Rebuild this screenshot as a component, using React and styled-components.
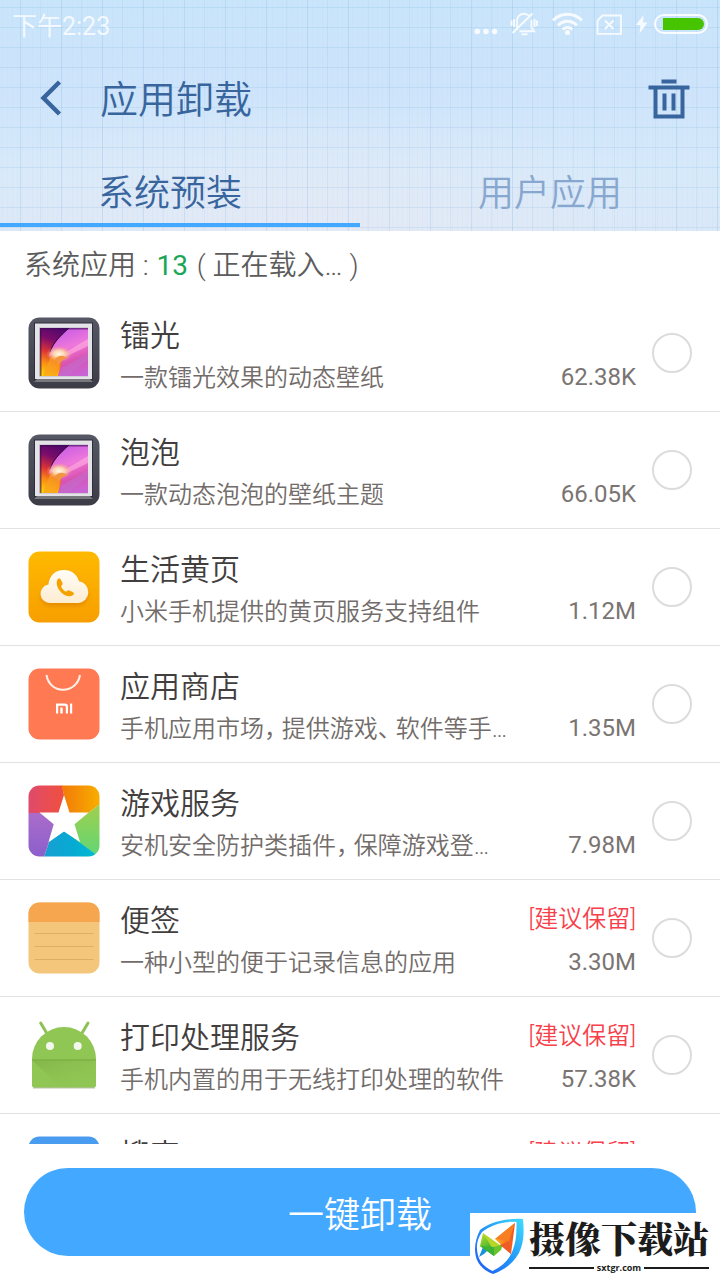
import React, { useState } from "react";
import styled, { createGlobalStyle } from "styled-components";

const GlobalStyle = createGlobalStyle`
  * {
    box-sizing: border-box;
  }
  body {
    margin: 0;
    background-color: white;
    font-family: Roboto, "Noto Sans CJK SC", sans-serif;
    font-weight: 350;
  }
  button {
    padding: 0;
    border: none;
    background: none;
    font-family: inherit;
    cursor: pointer;
  }
`;

const Page = styled.div`
  position: relative;
  display: flex;
  flex-flow: column;
  height: 100vh;
  overflow: hidden;
`;

const Header = styled.header`
  flex: none;
  background-image: repeating-linear-gradient(
      90deg,
      transparent 0 20px,
      rgba(110, 165, 215, 0.2) 20px 21px,
      transparent 21px 40px,
      rgba(110, 165, 215, 0.1) 40px 41px
    ),
    repeating-linear-gradient(
      90deg,
      transparent 0 2px,
      rgba(160, 200, 232, 0.08) 2px 3px,
      transparent 3px 5px
    ),
    repeating-linear-gradient(
      180deg,
      transparent 0 7px,
      rgba(110, 165, 215, 0.16) 7px 8px,
      transparent 8px 20px
    ),
    radial-gradient(
      ellipse 400px 130px at 42% 100%,
      rgba(230, 234, 245, 0.9),
      rgba(230, 234, 245, 0)
    ),
    linear-gradient(180deg, #c9e5fb 0%, #cee4fb 38%, #d7eafa 75%, #dae8f8 100%);
`;

const StatusBar = styled.div`
  display: flex;
  justify-content: space-between;
  align-items: center;
  height: 48px;
  padding: 0 12px;
  font-size: 25px;
  font-weight: 400;
  color: rgba(255, 255, 255, 0.8);
`;
const StatusIcons = styled.div`
  display: flex;
  align-items: center;
  gap: 12px;
  svg {
    display: block;
  }
`;
const Power = styled.div`
  display: flex;
  gap: 6px;
`;

const TitleBar = styled.div`
  display: flex;
  align-items: center;
  gap: 24px;
  height: 104px;
  padding: 0 28px;
  color: #38659d;
`;
const Title = styled.h1`
  flex: 1;
  margin: 0;
  font-size: 38px;
  font-weight: 350;
  line-height: 48px;
`;
const IconButton = styled.button`
  width: 48px;
  height: 48px;
  color: inherit;
  svg {
    display: block;
  }
`;

const Tabs = styled.div`
  display: flex;
  padding-bottom: 4px;
`;
const Tab = styled.button`
  flex: 1;
  && {
    padding: ${props => (props.$first ? "4px 20px 0 0" : "4px 0 0 20px")};
    border-bottom: 4px solid
      ${props => (props.$active ? "#43a8ff" : "transparent")};
  }
  height: 75px;
  font-size: 36px;
  font-weight: 350;
  color: ${props => (props.$active ? "#38659d" : "#88a7cf")};
`;

const Summary = styled.p`
  flex: none;
  margin: 0;
  padding: 15px 24px 9px;
  font-size: 28px;
  line-height: 40px;
  color: #5c5c5c;
`;
const Count = styled.span`
  margin: 0 2px 0 1px;
  font-weight: 400;
  color: #1aa655;
`;

const List = styled.ul`
  flex: 1;
  min-height: 0;
  margin: 0;
  padding: 0;
  overflow: hidden;
  list-style: none;
`;
const Row = styled.li`
  border-bottom: 1px solid #e2e2e2;
`;
const RowLabel = styled.label`
  display: flex;
  align-items: center;
  height: 116px;
  padding: 0 28px;
  cursor: pointer;
`;
const AppIcon = styled.svg`
  flex: none;
  width: 72px;
  height: 72px;
  margin-right: 20px;
`;
const Texts = styled.div`
  flex: 1;
  display: flex;
  flex-flow: column;
  gap: 8px;
  min-width: 0;
  padding-top: 6px;
`;
const Line = styled.div`
  display: flex;
  justify-content: space-between;
  align-items: flex-start;
  min-height: 32px;
`;
const Name = styled.span`
  font-size: 30px;
  line-height: 36px;
  color: #423e3e;
`;
const Tag = styled.span`
  font-size: 24px;
  line-height: 32px;
  color: #f8404a;
`;
const Description = styled.span`
  overflow: hidden;
  font-size: 24px;
  line-height: 32px;
  font-feature-settings: "halt";
  text-overflow: ellipsis;
  white-space: nowrap;
  color: #726c6a;
`;
const Size = styled.span`
  font-size: 24px;
  font-weight: 400;
  line-height: 30px;
  color: #7a7472;
`;
const Check = styled.input`
  flex: none;
  appearance: none;
  width: 40px;
  height: 40px;
  margin: 0 0 0 16px;
  border: 2px solid #dcdcdc;
  border-radius: 50%;
  &:checked {
    border: 12px solid #43a8ff;
  }
`;

const Footer = styled.footer`
  flex: none;
  padding: 24px;
`;
const UninstallButton = styled.button`
  display: block;
  width: 100%;
  height: 88px;
  border-radius: 44px;
  && {
    background-color: #43a8ff;
  }
  font-size: 36px;
  font-weight: 350;
  color: white;
`;

const Watermark = styled.div`
  position: absolute;
  right: 0;
  bottom: 0;
  display: flex;
  gap: 4px;
  height: 67px;
  padding: 0 11px 0 1px;
  background-color: white;
  color: #1c1c1c;
`;
const WatermarkName = styled.div`
  padding-top: 2px;
  font-family: "Noto Serif CJK SC", "Noto Sans CJK SC", serif;
  font-size: 36px;
  font-weight: 900;
  line-height: 46px;
  white-space: nowrap;
`;
const WatermarkSite = styled.div`
  display: flex;
  align-items: center;
  gap: 3px;
  font-family: "Open Sans", sans-serif;
  font-size: 9px;
  font-weight: 700;
  line-height: 14px;
  &::before,
  &::after {
    content: "";
    flex: 1;
    height: 2px;
    background-color: #1c1c1c;
  }
`;

const PictureArt = ({ id }) => (
  <>
    <defs>
      <linearGradient id={`${id}-case`} x2="0" y2="1">
        <stop offset="0" stopColor="#565866" />
        <stop offset="1" stopColor="#3b3c45" />
      </linearGradient>
      <linearGradient id={`${id}-left`} x1="0.5" y1="0" x2="0.1" y2="1">
        <stop offset="0" stopColor="#4a066e" />
        <stop offset="0.3" stopColor="#7c0d6a" />
        <stop offset="0.55" stopColor="#dc3434" />
        <stop offset="0.75" stopColor="#f98a14" />
        <stop offset="1" stopColor="#ffd800" />
      </linearGradient>
      <linearGradient id={`${id}-right`} x1="0.4" y1="0" x2="0.7" y2="1">
        <stop offset="0" stopColor="#c95ce6" />
        <stop offset="0.4" stopColor="#ee78da" />
        <stop offset="0.7" stopColor="#d952b0" />
        <stop offset="1" stopColor="#c964d4" />
      </linearGradient>
      <radialGradient id={`${id}-glow`}>
        <stop offset="0" stopColor="#fffbe8" />
        <stop offset="0.45" stopColor="#ffdcae" stopOpacity="0.9" />
        <stop offset="1" stopColor="#ff9a6c" stopOpacity="0" />
      </radialGradient>
      <clipPath id={`${id}-clip`}>
        <rect x="12" y="11" width="48" height="48" />
      </clipPath>
    </defs>
    <rect x="0.5" y="0.5" width="71" height="71" rx="11" fill={`url(#${id}-case)`} />
    <path d="M6 5.5h59v58H6z" fill="#2e2d3c" />
    <path d="M6 65l4-4h51l4 4z" fill="#77787c" />
    <rect x="7" y="6.500" width="57" height="55.500" fill="#e4e3e7" />
    <rect x="11" y="10.500" width="49" height="49" fill="#b9b4c2" />
    <g clipPath={`url(#${id}-clip)`}>
      <rect x="12" y="11" width="48" height="48" fill={`url(#${id}-left)`} />
      <path d="M41 11C30 21 23 29 21 40c6-4 11-3 12 2 1 6-2 12-3 17h30V11z" fill={`url(#${id}-right)`} />
      <path d="M60 22L38 35l-3 6 25-12z" fill="#ffa6e0" opacity="0.7" />
      <path d="M60 36L34 51l-4 8h10l20-16z" fill="#c070d0" opacity="0.5" />
      <path d="M41 11C31 20 25 26 22 35" fill="none" stroke="#32083c" strokeWidth="1" />
      <path d="M22 41c-2 6-6 12-7 18h13c2-6 4-11 6-17-4-5-8-5-12-1z" fill="#f9a022" opacity="0.7" />
      <ellipse cx="31" cy="37" rx="13" ry="8" fill={`url(#${id}-glow)`} />
      <path d="M27 42c4-4 8-4 12-1-4 1-7 4-9 8-1-3-1-5-3-7z" fill="#f3953c" />
      <path d="M12 11h48v1.500H13.500V59H12z" fill="#3b0a52" opacity="0.6" />
    </g>
  </>
);

const YellowPagesArt = () => (
  <>
    <defs>
      <linearGradient id="yp-bg" x2="0" y2="1">
        <stop offset="0" stopColor="#ffb900" />
        <stop offset="1" stopColor="#f79f00" />
      </linearGradient>
      <linearGradient id="yp-cloud" x2="0" y2="1">
        <stop offset="0" stopColor="#fffdf8" />
        <stop offset="1" stopColor="#fdecd0" />
      </linearGradient>
      <filter id="yp-shadow" x="-20%" y="-20%" width="140%" height="160%">
        <feDropShadow dx="0" dy="3" stdDeviation="2" floodColor="#d97a00" floodOpacity="0.6" />
      </filter>
    </defs>
    <rect x="0.5" y="0.5" width="71" height="71" rx="11" fill="url(#yp-bg)" />
    <path
      d="M22 52a9.300 9.300 0 0 1-1.500-18.500C21 25 27 19 36 19c7.500 0 13 4.500 15 11.200A11 11 0 0 1 50.500 52z"
      fill="url(#yp-cloud)"
      filter="url(#yp-shadow)"
    />
    <path
      d="M29.500 28.500c1-1.400 2.700-1.200 3.500.4l1.500 3c.6 1.300-.8 2.300-1.500 3.200.8 2.600 2.600 4.500 5 5.600 1-.7 2-1.900 3.300-1.300l3.400 1.500c1.600.8 1.500 2.400.2 3.400-3.400 2.200-8.300.6-11.800-3-3.700-3.700-5.600-9.200-3.600-12.800z"
      fill="#f5a200"
    />
  </>
);

const StoreArt = () => (
  <>
    <rect x="0.5" y="0.5" width="71" height="71" rx="11" fill="#ff7a52" />
    <path d="M18.500 7c1.500 9 8 14.800 16.500 14.800S50.500 16 52 7" fill="none" stroke="#fff1e8" strokeWidth="2" />
    <path d="M28 45.500V35.500h9a3 3 0 0 1 3 3v7h-2.200v-6.500a1.300 1.300 0 0 0-1.300-1.300h-6.300v7.800z" fill="white" />
    <path d="M32.300 39.500h2.400v6h-2.400zM42 35.500h2.200v10H42z" fill="white" />
  </>
);

const GameArt = () => (
  <>
    <defs>
      <clipPath id="game-clip">
        <rect x="0.5" y="0.5" width="71" height="71" rx="11" />
      </clipPath>
      <linearGradient id="game-red">
        <stop offset="0" stopColor="#df4a6c" />
        <stop offset="1" stopColor="#f0503e" />
      </linearGradient>
      <linearGradient id="game-orange">
        <stop offset="0" stopColor="#f27a08" />
        <stop offset="1" stopColor="#f8ae00" />
      </linearGradient>
      <linearGradient id="game-green" x2="0" y2="1">
        <stop offset="0" stopColor="#a2cf4c" />
        <stop offset="1" stopColor="#5fd676" />
      </linearGradient>
      <linearGradient id="game-blue">
        <stop offset="0" stopColor="#189fd2" />
        <stop offset="0.5" stopColor="#06aad3" />
        <stop offset="1" stopColor="#00bcd0" />
      </linearGradient>
      <linearGradient id="game-purple" x2="0" y2="1">
        <stop offset="0" stopColor="#aa6cca" />
        <stop offset="1" stopColor="#8b5fcb" />
      </linearGradient>
    </defs>
    <g clipPath="url(#game-clip)">
      <path d="M0 0h34l2 10v26L12 28H0z" fill="url(#game-red)" />
      <path d="M33.500 0H72v19L46 39H36V10z" fill="url(#game-orange)" />
      <path d="M72 19L46 39l-10 8 31 22 5 3z" fill="url(#game-green)" />
      <path d="M36 46l-15 11-5 15h55l-5-4z" fill="url(#game-blue)" />
      <path d="M0 28h12l24 8-15 21-5 15H0z" fill="url(#game-purple)" />
      <path
        d="M36 10l5.500 17.500H60.500L46.500 39.300 52 57 36 46.500 20.500 57l5.200-17.700L11.500 27.500h19z"
        fill="white"
      />
    </g>
  </>
);

const NotesArt = () => (
  <>
    <rect x="0.5" y="0.5" width="71" height="71" rx="11" fill="#f4c67c" />
    <path d="M0.500 20v-8.500a11 11 0 0 1 11-11h49a11 11 0 0 1 11 11V20z" fill="#f7a650" />
    <path d="M6.500 31.500h59M6.500 44.500h59M6.500 57.500h59" stroke="#dcae68" strokeWidth="1" />
  </>
);

const AndroidArt = () => (
  <>
    <defs>
      <linearGradient id="droid-shade" x1="0" y1="0" x2="0.8" y2="1">
        <stop offset="0" stopColor="#7fae47" />
        <stop offset="1" stopColor="#8ec552" stopOpacity="0" />
      </linearGradient>
    </defs>
    <path d="M12.700 4l6.500 11M60 4l-6.500 11" stroke="#8ec153" strokeWidth="3" strokeLinecap="round" />
    <path d="M4 40a32 32 0 0 1 64 0v26a3 3 0 0 1-3 3H7a3 3 0 0 1-3-3z" fill="#90c653" />
    <path d="M4 41h64v25a3 3 0 0 1-3 3H33z" fill="url(#droid-shade)" opacity="0.7" />
    <path d="M4 41h64" stroke="#7db243" strokeWidth="1.500" />
    <path d="M5 69h62" stroke="#b9c4ac" strokeWidth="1" />
    <circle cx="22" cy="27" r="4" fill="#f4f7ee" />
    <circle cx="49.700" cy="27" r="4" fill="#f4f7ee" />
  </>
);

const SearchArt = () => (
  <>
    <rect x="0.5" y="0.5" width="71" height="71" rx="11" fill="#4a9cf0" />
    <circle cx="33" cy="33" r="14" fill="none" stroke="white" strokeWidth="4" />
    <path d="M43 43l12 12" stroke="white" strokeWidth="4" />
  </>
);

const apps = [
  { id: "leiguang", name: "镭光", desc: "一款镭光效果的动态壁纸", size: "62.38K", Art: PictureArt },
  { id: "paopao", name: "泡泡", desc: "一款动态泡泡的壁纸主题", size: "66.05K", Art: PictureArt },
  { id: "yellow", name: "生活黄页", desc: "小米手机提供的黄页服务支持组件", size: "1.12M", Art: YellowPagesArt },
  { id: "store", name: "应用商店", desc: "手机应用市场， 提供游戏、 软件等手…", size: "1.35M", Art: StoreArt },
  { id: "game", name: "游戏服务", desc: "安机安全防护类插件， 保障游戏登…", size: "7.98M", Art: GameArt },
  { id: "notes", name: "便签", desc: "一种小型的便于记录信息的应用", size: "3.30M", keep: true, Art: NotesArt },
  { id: "print", name: "打印处理服务", desc: "手机内置的用于无线打印处理的软件", size: "57.38K", keep: true, Art: AndroidArt },
  { id: "search", name: "搜索", desc: "", size: "", keep: true, Art: SearchArt }
];

const StatusBarComponent = () => (
  <StatusBar>
    <span>下午2:23</span>
    <StatusIcons>
      <svg width="24" height="24" fill="white" opacity="0.85">
        <circle cx="3.300" cy="19.500" r="2.800" />
        <circle cx="12" cy="19.500" r="2.800" />
        <circle cx="20.600" cy="19.500" r="2.800" />
      </svg>
      <svg width="30" height="24" fill="none" stroke="white" strokeWidth="1.900" opacity="0.85">
        <path d="M7 18V9.500C7 4.500 10 1.700 14 1.700c2.500 0 4 .8 5.300 2.200M21.500 8v7.500l2.500 3.700H9.500" />
        <path d="M2.500 21L22.500 1.500M11.500 22.300h6" />
        <path d="M1.500 8.500v5.500M4 7v8M24.500 7v8M27 8.500v5.500" />
      </svg>
      <svg width="32" height="24" fill="none" stroke="white" strokeWidth="3" opacity="0.85">
        <path d="M1 8.300C9.500.3 21.500.3 30 8.300M6 13.300c6-5.300 13-5.300 19 0M10.500 17.500c3-2.800 7-2.800 10 0" />
        <circle cx="15.500" cy="20.500" r="2.500" fill="white" stroke="none" />
      </svg>
      <svg width="28" height="24" fill="none" stroke="white" strokeWidth="1.800" opacity="0.85">
        <path d="M6.500 3.500H25v18.300H1.500V8.500z" />
        <path d="M9 8.500l8.500 8.500M17.500 8.500L9 17" strokeWidth="2" />
      </svg>
      <Power>
        <svg width="12" height="24" fill="white" opacity="0.85">
          <path d="M7.500 3L0 13h4.500L3.500 21.500 11.500 10.500H7z" />
        </svg>
        <svg width="54" height="24">
          <rect x="1" y="3" width="52" height="18" rx="9" fill="none" stroke="white" strokeWidth="2" opacity="0.9" />
          <path d="M9 6h35a6 6 0 0 1 0 12H9z" fill="#47c400" />
        </svg>
      </Power>
    </StatusIcons>
  </StatusBar>
);

const AppRow = ({ app, checked, onToggle }) => (
  <Row>
    <RowLabel>
      <AppIcon viewBox="0 0 72 72" aria-hidden="true">
        <app.Art id={app.id} />
      </AppIcon>
      <Texts>
        <Line>
          <Name>{app.name}</Name>
          {app.keep && <Tag>[建议保留]</Tag>}
        </Line>
        <Line>
          <Description>{app.desc}</Description>
          <Size>{app.size}</Size>
        </Line>
      </Texts>
      <Check type="checkbox" checked={checked} onChange={() => onToggle(app.id)} />
    </RowLabel>
  </Row>
);

const WatermarkComponent = () => (
  <Watermark>
    <svg width="54" height="67" aria-hidden="true">
      <defs>
        <linearGradient id="shield" x1="1" y1="0" x2="0" y2="1">
          <stop offset="0" stopColor="#3fdcff" />
          <stop offset="0.5" stopColor="#2196f8" />
          <stop offset="1" stopColor="#1f57f5" />
        </linearGradient>
        <linearGradient id="mark-left" x1="0" y1="0" x2="0.4" y2="1">
          <stop offset="0" stopColor="#c6de26" />
          <stop offset="1" stopColor="#1faa38" />
        </linearGradient>
        <linearGradient id="mark-right">
          <stop offset="0" stopColor="#fbb321" />
          <stop offset="1" stopColor="#ee4b23" />
        </linearGradient>
      </defs>
      <path
        d="M9 17C18 10 33 5 52 6c1 12 1 20-2 29-4 12-14 21-28 26C9 56 4 47 4 36c0-7 2-13 5-19zM11 19C7 25 5.500 30 6 36c.5 10 5 17 15.500 22 11-5 18-13 21-23 3-8 3-17 3-26C32 8 20 12 11 19z"
        fill="url(#shield)"
        fillRule="evenodd"
      />
      <path d="M12 34L8 44l5-3 5-5z" fill="#1693dc" />
      <path d="M12 20l11 14v9L9 33z" fill="url(#mark-left)" />
      <path d="M12 20l17 12-6 6z" fill="#b7d728" />
      <path d="M9 33l14 1v9z" fill="#3cb334" />
      <path d="M23 34l9-3-2 6-7 6z" fill="#6cc42c" />
      <path d="M44 10L24 26l16 15z" fill="url(#mark-right)" />
      <path d="M44 10l-6 18-14-2z" fill="#f77f22" />
      <path d="M38 28l2 13-11-9z" fill="#ef5a25" />
    </svg>
    <div>
      <WatermarkName>摄像下载站</WatermarkName>
      <WatermarkSite>sxtgr.com</WatermarkSite>
    </div>
  </Watermark>
);

const App = () => {
  const [tab, setTab] = useState("system");
  const [selected, setSelected] = useState([]);

  const toggle = id => {
    setSelected(
      selected.includes(id) ? selected.filter(s => s !== id) : [...selected, id]
    );
  };

  return (
    <Page>
      <GlobalStyle />
      <Header>
        <StatusBarComponent />
        <TitleBar>
          <IconButton aria-label="返回">
            <svg width="48" height="48" fill="none" stroke="currentColor" strokeWidth="4.500">
              <path d="M31.500 6L15.500 22l16 16" />
            </svg>
          </IconButton>
          <Title>应用卸载</Title>
          <IconButton aria-label="删除">
            <svg width="48" height="48" fill="none" stroke="currentColor" strokeWidth="4">
              <path d="M17.500 5.500h15M4.500 11.500h41M11.500 12v28.500h27V12M20.500 17.500v17M29.500 17.500v17" />
            </svg>
          </IconButton>
        </TitleBar>
        <Tabs role="tablist">
          <Tab
            role="tab"
            $first
            $active={tab === "system"}
            aria-selected={tab === "system"}
            onClick={() => setTab("system")}
          >
            系统预装
          </Tab>
          <Tab
            role="tab"
            $active={tab === "user"}
            aria-selected={tab === "user"}
            onClick={() => setTab("user")}
          >
            用户应用
          </Tab>
        </Tabs>
      </Header>
      <Summary>
        系统应用 : <Count>13</Count> ( 正在载入… )
      </Summary>
      <List>
        {apps.map(app => (
          <AppRow
            key={app.id}
            app={app}
            checked={selected.includes(app.id)}
            onToggle={toggle}
          />
        ))}
      </List>
      <Footer>
        <UninstallButton>一键卸载</UninstallButton>
      </Footer>
      <WatermarkComponent />
    </Page>
  );
};

export default App;
